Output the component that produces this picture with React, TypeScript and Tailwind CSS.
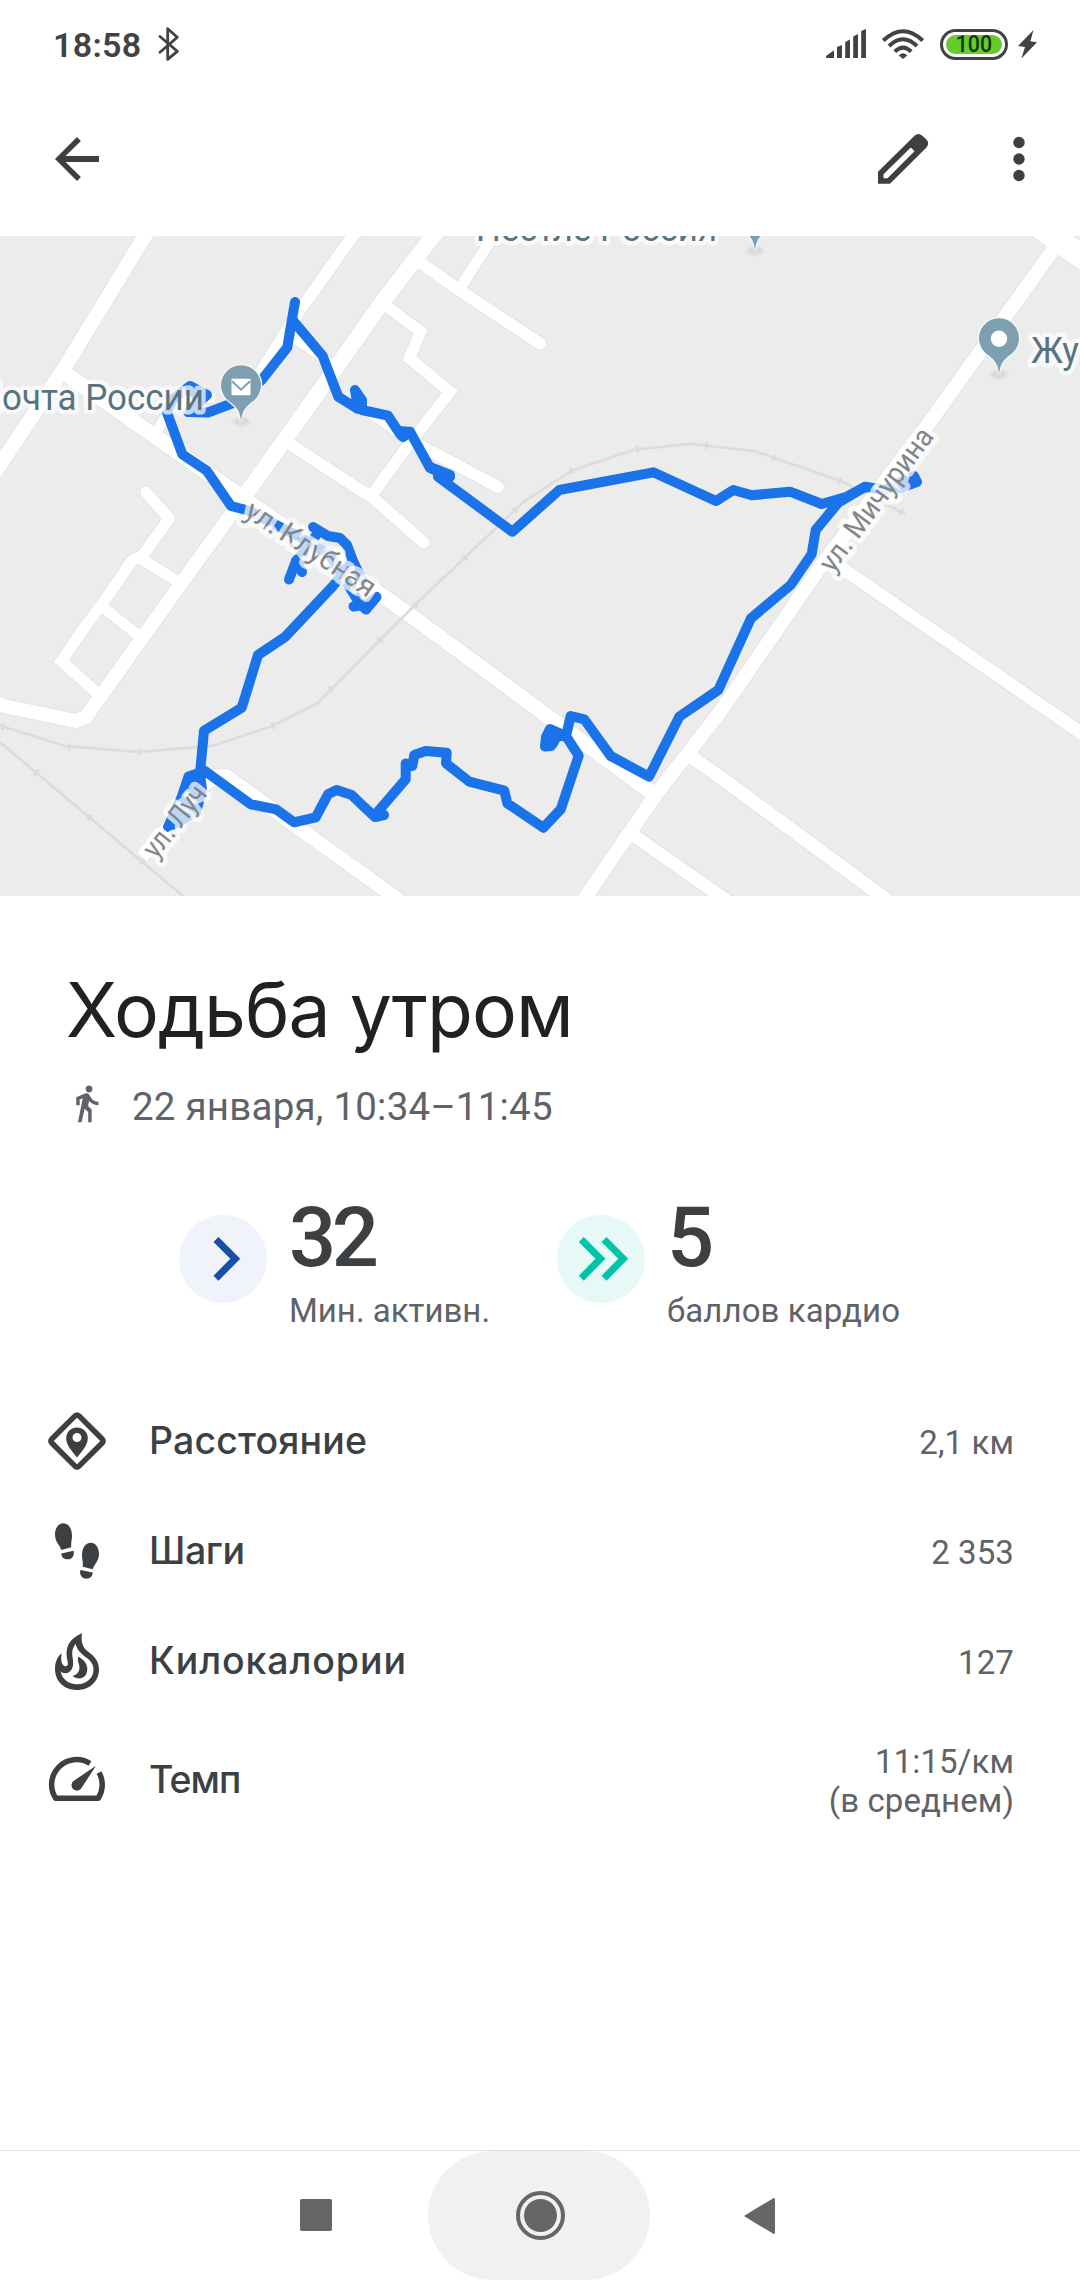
import React from 'react';

// width, points
const roads: [number, string][] = [
  [14.5, '151,226 63,370 -10,480'],
  [15, '66,374 246,500 410,615 652,793'],
  [12, '360,226 296.5,315 258,377 235,405'],
  [10, '158,430 176,396 215,398'],
  [16, '440,227 383,301 333,372 246,494'],
  [14, '246,494 198,560 103,693 86,717 76,721 4,706 -10,700'],
  [12, '418,261 459,290'],
  [10, '293,337 334,366'],
  [11, '345,395 410,440'],
  [11, '498,229 460,288'],
  [11.5, '385,305 420.7,331.7 409.3,358.3 450,391.7 410,443 371.7,495'],
  [12, '290,444 360,490 372,497'],
  [14, '197,777 226,776 360,872 400,901'],
  [13, '226,774 205,784 142,857'],
  [14, '1053,250 924,430 823,563 720,712 657,793 580,905'],
  [24, '1039,226 1100,270'],
  [13, '833,562 1090,739'],
  [13.5, '690,756 720,777 895,906'],
  [13, '633,835 730,903'],
  [11.5, '169.3,518.3 143,555 132,561 105,600 84,628 61.5,661 98,694'],
  [11, '138,557 180,583'],
  [11, '105,609 138,635'],
];

const deadEnds: [number, string][] = [
  [12, '459,290 540,343.5'],
  [12, '410,440 498,487'],
  [12, '372,497 423.5,542.5'],
  [11.5, '146,492.5 169.3,518.3'],
];

const railways = [
  '-5,724 65,746 139,752 213,745.7 273,725.7 318,703 380,640 415,605 515,510 525,501 571.7,470.7 633,450 690,443.7 720,447.3 755,451.3 840,480.7 905,514',
  '-5,738 190,902',
];

// x, y, angle of the track
const sleepers = [
  [3, 727, 17], [69, 747, 5], [139, 752, 0], [273, 725.7, -22], [331, 689, -45],
  [380, 640, -45], [415, 605, -43], [465, 557.7, -43], [515, 510, -43], [571.7, 470.7, -25],
  [637.5, 449.7, -8], [706.5, 445.7, 7], [774, 458, 18], [840, 480.7, 22], [901.5, 512.3, 27],
  [36.5, 772.5, 40], [89.5, 817.3, 40], [142.5, 861.5, 40],
];

const route = [
  '295,302 291.7,321 287.3,347.3 261.7,380 233,403 208,412.5 188,412 207,395 190,386 173,399 166.7,411.7 182.3,454.3 206.7,470.7 231,506 250,511 280,527 300,537 330,555 342,575 360,604 366,609.5 376.5,597 368,604 353.5,606.5',
  '313,527 328,536 340,538 347,545 353,561 362,580',
  '318,532 310,545 296,561 289,579.5',
  '296,561 302,572',
  '350,564 333,586 285,637 258,655 241.7,707.7 204,730.7 200,773.3 202,790 196,812 168,827 181.7,797 188.5,776.5 205,771 250.7,804.3 276,809.3 294,822.3 315.7,817.3 328,794.3 336.7,790 351.7,795 361,804 375,817 384,815 375,815 405.7,779.3 405.7,763.5 412.3,766 414.3,755 425.7,751 446.7,752.7 446,763.3 469.3,781.7 504.3,790.7 507.3,803.3 543.3,827.7 560.7,809.3 578.7,755.7 566,736 550,729 546,737 545,746.5 551,746 556,736 566,736 570.7,716 584.3,719.3 610.7,756 649,776.7 679.3,716.7 718.3,690 751,618.3 790.7,585 811.7,554 815.7,530 838,503 865,486.7 885,490 914,476 917,482 900,488',
  '292.5,320 322.7,356 338.3,396.7 358,409 355,390 362,400 362,410 388,415.7 400,434 403,437 410,431.7 430,468 450,477 438,476.7 512.3,531.7 559.3,490 653.3,472.3 716,501 733.3,490 751.7,495.3 790,491.7 821.7,504 846.7,496.7 865,487',
  '400,431 410,432',
  '430,467 450,475',
];

function Pin({ x, y, mail }: { x: number; y: number; mail?: boolean }) {
  return (
    <g transform={`translate(${x} ${y})`}>
      <ellipse cx="0" cy="36" rx="10" ry="5.500" fill="#000" opacity="0.03" />
      <ellipse cx="0" cy="35.500" rx="7" ry="3.500" fill="#000" opacity="0.04" />
      <path
        d="M0 35C-1.5 24-5 21-10.500 16.500A20 20 0 1 1 10.500 16.500C5 21 1.500 24 0 35Z"
        fill="#7d9fb0"
        stroke="#f6f8f9"
        strokeWidth="2.5"
        paintOrder="stroke"
      />
      {mail ? (
        <>
          <rect x="-9.500" y="-7" width="19" height="16.500" fill="#fff" />
          <path d="M-9-4.500L0 4L9-4.500" fill="none" stroke="#7d9fb0" strokeWidth="2" />
        </>
      ) : (
        <circle cx="0" cy="0" r="8.200" fill="#fff" />
      )}
    </g>
  );
}

function RouteMap() {
  return (
    <svg viewBox="0 236 1080 660" className="block w-full h-[660px] bg-[#ececec] font-['Roboto',sans-serif]">
      <g fill="none" stroke="#dadce0" strokeWidth="2.6">
        {railways.map((p) => (
          <polyline key={p} points={p} />
        ))}
        {sleepers.map(([x, y, a]) => (
          <path key={x} d="M0-3.500V3.500" strokeWidth="3" transform={`translate(${x} ${y}) rotate(${a})`} />
        ))}
      </g>
      <g fill="none" stroke="#dfe0e2">
        {roads.map(([w, p]) => (
          <polyline key={p} points={p} strokeWidth={w + 1.4} />
        ))}
        {deadEnds.map(([w, p]) => (
          <polyline key={p} points={p} strokeWidth={w + 1.4} strokeLinecap="round" />
        ))}
      </g>
      <g fill="none" stroke="#fff">
        {roads.map(([w, p]) => (
          <polyline key={p} points={p} strokeWidth={w} />
        ))}
        {deadEnds.map(([w, p]) => (
          <polyline key={p} points={p} strokeWidth={w} strokeLinecap="round" />
        ))}
      </g>
      {/* Level crossing */}
      <path d="M397 623L415 605L420 600.250" fill="none" stroke="#dadce0" strokeWidth="2.600" />

      <g fill="none" stroke="#1a73e8" strokeWidth="10" strokeLinecap="round" strokeLinejoin="round">
        {route.map((p) => (
          <polyline key={p} points={p} />
        ))}
      </g>
      <path
        d="M549 727L562 733L555 746L546 749L543 740Z M188 777L182 797L166 826L196 815L201 795V775Z M299 560L312 545L303 562Z M188 388L207 396L200 408Z"
        fill="#1a73e8"
        stroke="#1a73e8"
        strokeWidth="4"
        strokeLinejoin="round"
      />

      {/* Street names */}
      <g fontSize="29" fill="#80868b" stroke="#fff" strokeOpacity="0.72" strokeWidth="10" strokeLinejoin="round" paintOrder="stroke">
        <path id="club" d="M243 516Q308 557 378 605" fill="none" stroke="none" />
        <text textLength="150">
          <textPath href="#club">ул. Клубная</textPath>
        </text>
        <text textLength="171" lengthAdjust="spacingAndGlyphs" transform="translate(833 574) rotate(-53.500)">ул. Мичурина</text>
        <text textLength="84" lengthAdjust="spacingAndGlyphs" transform="translate(156 860) rotate(-51.500)">ул. Луч</text>
      </g>

      {/* Places */}
      <g fontSize="36.5" fill="#587380" stroke="#fff" strokeOpacity="0.72" strokeWidth="9" strokeLinejoin="round" paintOrder="stroke">
        <text x="-23" y="410" textLength="227" lengthAdjust="spacingAndGlyphs">Почта России</text>
        <text x="1031" y="363" textLength="48" lengthAdjust="spacingAndGlyphs">Жу</text>
        <text x="476" y="240.5" textLength="241" lengthAdjust="spacingAndGlyphs">Нестле Россия</text>
      </g>
      <Pin x={241} y={385.7} mail />
      <Pin x={999} y={338.7} />
      <Pin x={755} y={215} />
    </svg>
  );
}

function StatusBar() {
  return (
    <div className="h-[88px] pl-[53px] pr-[43px] flex items-center text-[#424242]">
      <span className="w-[88px] pt-[2px] text-[34px] leading-none font-semibold tracking-[0.3px]">18:58</span>
      <svg viewBox="158 27 21 34" className="w-[21px] h-[34px] ml-[17px]" fill="none" stroke="#424242" strokeWidth="2.8" strokeLinecap="round" strokeLinejoin="round">
        <path d="M160 36.500L177.300 51.300L167.700 59.300V28.700L177.300 37.300L160 52.300" />
      </svg>
      <div className="ml-auto flex items-center">
        <svg viewBox="825 28 42 32" className="w-[42px] h-8" fill="#424242">
          <path d="M826 56L834 50.300V58H827Q826 58 826 57Z M837 47L842 45V58H837Z M845.200 42L850 39.500V58H845.200Z M853.200 36.500L858 34V58H853.200Z M861.200 31L866 29V58H861.200Z" />
        </svg>
        <svg viewBox="881 28 44 32" className="w-11 h-8 ml-[14px]" fill="none" stroke="#424242" strokeWidth="4">
          <path d="M883.300 40.500Q903 22 922.700 40.500" />
          <path d="M889 46Q903 32.500 917 46" />
          <path d="M894.800 51.700Q903 43.500 911.200 51.700" />
          <path d="M903 59L898.800 55.500Q903 51 907.200 55.500Z" fill="#424242" stroke="none" />
        </svg>
        <div className="ml-[15px] w-[68px] h-[31px] rounded-full border-[3px] border-[#424242] p-[3px]">
          <div className="h-full rounded-full bg-[#66cb2b] flex items-center justify-center">
            <span className="text-[24.5px] leading-none font-medium text-[#123506] scale-x-[0.87]">100</span>
          </div>
        </div>
        <svg viewBox="1018 29 19 30" className="w-[19px] h-[30px] ml-[10px]" fill="#424242">
          <path d="M1033.500 30L1018 46L1025 47L1021.400 58.500L1037 42.300L1030.400 41.300Z" />
        </svg>
      </div>
    </div>
  );
}

function Toolbar() {
  return (
    <div className="h-[148px] pl-11 pr-7 pb-[6px] flex items-center text-[#3c4043]">
      <svg viewBox="0 0 24 24" className="w-[66px] h-[66px]" fill="currentColor">
        <path d="M20 10.900H7.830l5.590-5.490L12 4l-8 8 8 8 1.410-1.410L7.830 13.100H20z" />
      </svg>
      <svg viewBox="870 126 66 66" className="w-[66px] h-[66px] ml-auto" fill="currentColor" fillRule="evenodd">
        <path d="M878 183.700V171.700L914.500 135.700Q918.400 132.500 922.300 135.700L926.500 139.500Q929.800 143.300 926.500 147.500L890 183.700Z M883.500 178.200H887.500L914.500 151.300L910.800 147.600L883.500 174.300Z" />
      </svg>
      <svg viewBox="0 0 66 66" className="w-[66px] h-[66px] ml-[50px]" fill="currentColor">
        <circle cx="33" cy="16.500" r="5.700" />
        <circle cx="33" cy="33" r="5.700" />
        <circle cx="33" cy="49.500" r="5.700" />
      </svg>
    </div>
  );
}

const metrics = [
  {
    label: 'Расстояние',
    value: ['2,1 км'],
    height: 'h-[110px]',
    tracking: 'tracking-[0.15px]',
    icon: (
      <>
        <rect x="13.800" y="13.800" width="38.400" height="38.400" rx="2.500" transform="rotate(45 33 33)" fill="none" stroke="currentColor" strokeWidth="5.500" />
        <path fillRule="evenodd" d="M33 49.500C26 41 22.200 36 22.200 30.200A10.800 10.800 0 0 1 43.800 30.200C43.800 36 40 41 33 49.500Z M33 25A4.500 4.500 0 1 0 33 34A4.500 4.500 0 1 0 33 25Z" />
      </>
    ),
  },
  {
    label: 'Шаги',
    value: ['2 353'],
    height: 'h-[110px]',
    tracking: 'tracking-[-0.4px]',
    icon: (
      <>
        <path d="M17.300 32C16 27 11 24 11 16.500C11 10 14.500 5.300 19.300 5.300C24.500 5.300 28 10.500 28 18C28 22 26.700 25 27.300 29.300Z" />
        <path d="M17.300 35.400L29.500 32.700C31 37.500 28 41.300 23.700 41.300C20 41.300 17.500 39.500 17.300 35.400Z" />
        <path d="M48.700 51.300C50 46.500 55 43 55 36C55 29.500 51.500 24.700 46.700 24.700C41.500 24.700 38 30 38 37C38 41.500 39.300 44.500 38.700 48.700Z" />
        <path d="M48.700 54.500L36.400 52C35 56.500 38 60.700 42.300 60.700C46 60.700 48.500 58.500 48.700 54.500Z" />
      </>
    ),
  },
  {
    label: 'Килокалории',
    value: ['127'],
    height: 'h-[110px]',
    tracking: 'tracking-[0.9px]',
    icon: (
      <>
        <path
          fillRule="evenodd"
          d="M38 5.300C36.800 14 38.500 19.500 44 23.500C51 28.500 55 34 55 41.500C55 53.500 45.500 62 33 62C20.500 62 11 53.500 11 41C11 34 13.500 28.500 17.700 25.300C16.500 32 17.500 36.500 20.500 38C23.500 39 24.500 36.500 23.500 33C20.500 20 24.500 11 38 5.300Z M31.700 16C27.500 21 28 26 28.700 30C30.500 39.500 27 45 21.500 45.200C19.500 45.300 18 44.800 16.700 43.500C18 51 24.500 56.300 33 56.300C42.500 56.300 49.500 50 49.500 41.500C49.500 37 47.500 33.500 43 30C36 25 33 21.500 31.700 16Z"
        />
        <path d="M34.300 28.500C39.500 31.500 43.300 35.500 43.300 41C43.300 47 39.500 50.500 35.300 50.500C32.500 50.500 30 49.500 28.700 48C34 46.500 36.500 42 35 36.500C34 33.500 33.500 31.500 34.300 28.500Z" />
      </>
    ),
  },
  {
    label: 'Темп',
    value: ['11:15/км', '(в среднем)'],
    height: 'h-[128px]',
    tracking: 'tracking-[-1px]',
    icon: (
      <>
        <path d="M46 16.500A25 25 0 0 0 11.700 51.300H54.300A25 25 0 0 0 55 25.500" fill="none" stroke="currentColor" strokeWidth="5.500" strokeLinejoin="round" />
        <path d="M52 18.800L37.800 40.500A5.400 5.400 0 1 1 29.800 33.800Z" />
      </>
    ),
  },
];

export default function App() {
  return (
    <div className="w-[1080px] h-[2280px] bg-white flex flex-col overflow-hidden font-['Roboto',sans-serif]">
      <StatusBar />
      <Toolbar />
      <RouteMap />

      {/* Title */}
      <div className="h-[254px] pl-[66px] pt-[66px]">
        <h1 className="font-['Inter',sans-serif] text-[75px] leading-[96px] tracking-[-1px] text-[#202124] whitespace-nowrap">Ходьба утром</h1>
        <div className="mt-[21px] h-[52px] flex items-center text-[#5f6368]">
          <svg viewBox="0 0 24 24" className="w-[41px] h-[41px] mb-[3px]" fill="currentColor">
            <path d="M13.500 5.500c1.100 0 2-.9 2-2s-.9-2-2-2-2 .9-2 2 .9 2 2 2zM9.800 8.900L7 23h2.100l1.800-8 2.100 2v6h2v-7.500l-2.100-2 .6-3C14.800 12 16.800 13 19 13v-2c-1.900 0-3.500-1-4.300-2.400l-1-1.600c-.4-.6-1-1-1.700-1-.3 0-.5.1-.8.1L6 8.300V13h2V9.600l1.800-.7" />
          </svg>
          <span className="ml-[25px] pt-[4px] text-[38.500px] leading-none tracking-[0.22px]">22 января, 10:34–11:45</span>
        </div>
      </div>

      {/* Heart points */}
      <div className="h-[236px] pl-[179px] pt-[38px] flex items-start">
        <div className="flex w-[378px]">
          <svg viewBox="0 0 88 88" className="w-[88px] h-[88px] mt-[27px]">
            <circle cx="44" cy="44" r="44" fill="#f0f3fa" />
            <path d="M37 24.500L56.300 43.800L37 63.200" fill="none" stroke="#174ea6" strokeWidth="7" />
          </svg>
          <div className="ml-[22px]">
            <div className="pt-[1px] text-[83px] leading-[97px] font-medium tracking-[-4.500px] text-[#3c4043]">32</div>
            <div className="mt-[6px] text-[33px] leading-[38px] text-[#5f6368] whitespace-nowrap">Мин. активн.</div>
          </div>
        </div>
        <div className="flex">
          <svg viewBox="0 0 88 88" className="w-[88px] h-[88px] mt-[27px]">
            <circle cx="44" cy="44" r="44" fill="#e7f9f6" />
            <path d="M24.300 24.500L43.500 43.800L24.300 63.200M47 24.500L66.300 43.800L47 63.200" fill="none" stroke="#00c4a7" strokeWidth="7" />
          </svg>
          <div className="ml-[22px]">
            <div className="pt-[1px] text-[83px] leading-[97px] font-medium text-[#3c4043]">5</div>
            <div className="mt-[6px] text-[33px] leading-[38px] tracking-[0.08px] text-[#5f6368] whitespace-nowrap">баллов кардио</div>
          </div>
        </div>
      </div>

      {/* Metrics */}
      <div className="flex-1 pl-11 pr-[66px]">
        {metrics.map((m) => (
          <div key={m.label} className={`${m.height} flex items-center`}>
            <svg viewBox="0 0 66 66" className="w-[66px] h-[66px] text-[#3c4043]" fill="currentColor">
              {m.icon}
            </svg>
            <span className={`ml-[39px] font-['Inter',sans-serif] font-medium text-[37.500px] leading-none text-[#3c4043] ${m.tracking}`}>{m.label}</span>
            <div className="ml-auto pt-[2px] text-right text-[33px] leading-[39px] tracking-[0.1px] text-[#5f6368]">
              {m.value.map((line) => (
                <div key={line}>{line}</div>
              ))}
            </div>
          </div>
        ))}
      </div>

      {/* Navigation bar */}
      <div className="h-[130px] border-t border-[#e2e2e2] pl-[300px] flex items-center">
        <div className="w-8 h-8 mb-[2px] rounded-[2px] bg-[#666]"></div>
        <div className="ml-24 w-[222px] h-full rounded-[65px] bg-[#f1f1f1] flex items-center justify-center">
          <div className="ml-[3px] w-[49px] h-[49px] rounded-full border-4 border-[#666] p-1">
            <div className="w-full h-full rounded-full bg-[#666]"></div>
          </div>
        </div>
        <svg viewBox="0 0 32 38" className="w-8 h-[38px] ml-[94px]">
          <path d="M1.500 19L30 2V36Z" fill="#666" stroke="#666" strokeWidth="2" strokeLinejoin="round" />
        </svg>
      </div>
    </div>
  );
}
